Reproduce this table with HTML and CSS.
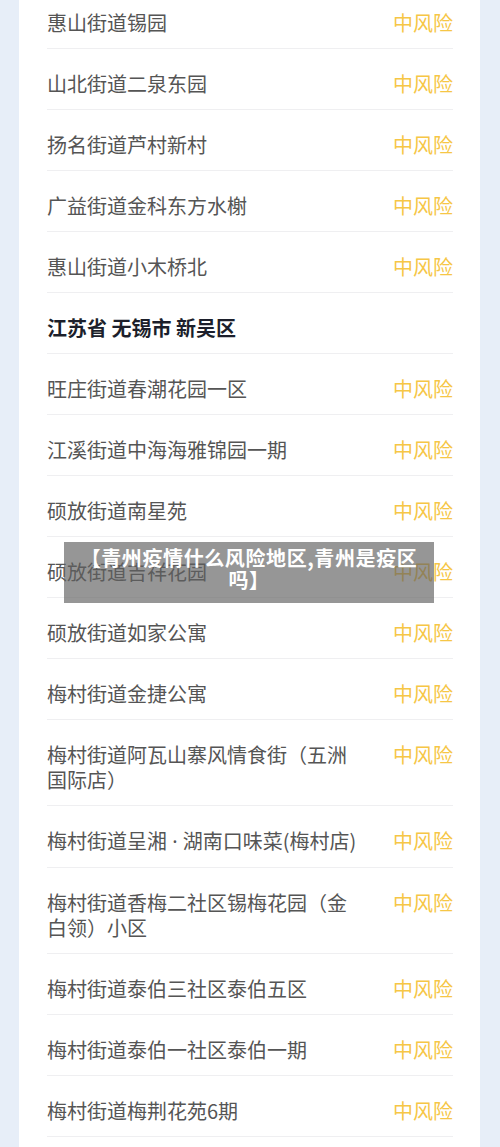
FILE: index.html
```html
<!DOCTYPE html>
<html lang="zh-CN">
<head>
  <meta charset="UTF-8">
  <meta name="viewport" content="width=device-width, initial-scale=1.0">
  <title>风险地区</title>
  <link rel="stylesheet" href="styles.css">
</head>
<body>
  <div class="card">
    <ul class="area-list">
      <li class="area-row"><span class="area-name">惠山街道锡园</span><span class="risk">中风险</span></li>
      <li class="area-row"><span class="area-name">山北街道二泉东园</span><span class="risk">中风险</span></li>
      <li class="area-row"><span class="area-name">扬名街道芦村新村</span><span class="risk">中风险</span></li>
      <li class="area-row"><span class="area-name">广益街道金科东方水榭</span><span class="risk">中风险</span></li>
      <li class="area-row"><span class="area-name">惠山街道小木桥北</span><span class="risk">中风险</span></li>
      <!-- region header -->
      <li class="area-row region">江苏省 无锡市 新吴区</li>
      <li class="area-row"><span class="area-name">旺庄街道春潮花园一区</span><span class="risk">中风险</span></li>
      <li class="area-row"><span class="area-name">江溪街道中海海雅锦园一期</span><span class="risk">中风险</span></li>
      <li class="area-row"><span class="area-name">硕放街道南星苑</span><span class="risk">中风险</span></li>
      <li class="area-row"><span class="area-name">硕放街道吉祥花园</span><span class="risk">中风险</span></li>
      <li class="area-row"><span class="area-name">硕放街道如家公寓</span><span class="risk">中风险</span></li>
      <li class="area-row"><span class="area-name">梅村街道金捷公寓</span><span class="risk">中风险</span></li>
      <li class="area-row"><span class="area-name">梅村街道阿瓦山寨风情食街（五洲国际店）</span><span class="risk">中风险</span></li>
      <li class="area-row"><span class="area-name">梅村街道呈湘<span class="dot"> · </span>湖南口味菜(梅村店)</span><span class="risk">中风险</span></li>
      <li class="area-row"><span class="area-name">梅村街道香梅二社区锡梅花园（金白领）小区</span><span class="risk">中风险</span></li>
      <li class="area-row"><span class="area-name">梅村街道泰伯三社区泰伯五区</span><span class="risk">中风险</span></li>
      <li class="area-row"><span class="area-name">梅村街道泰伯一社区泰伯一期</span><span class="risk">中风险</span></li>
      <li class="area-row"><span class="area-name">梅村街道梅荆花苑6期</span><span class="risk">中风险</span></li>
    </ul>
  </div>

  <!-- caption overlay -->
  <div class="caption">【青州疫情什么风险地区,青州是疫区吗】</div>
</body>
</html>
```

FILE: styles.css
```css
/* General styling */
body {
  margin: 0;
  font-family: "Noto Sans CJK SC", "Noto Sans", sans-serif;
  background-color: #e7eef8;
  color: #555;
  overflow: hidden;
}
.card {
  margin: -12px 20px 0 19px;
  padding: 0 27px 30px 28px;
  background-color: #fff;
}
/* List styling */
.area-list {
  list-style: none;
  margin: 0;
  padding: 0;
}
.area-row {
  display: flex;
  justify-content: space-between;
  align-items: flex-start;
  padding: 22px 0 13px;
  font-size: 20px;
  line-height: 25px;
  border-bottom: 1px solid #efeff1;
}
.area-name {
  width: 318px;
  color: #555;
}
.dot {
  font-family: "Noto Sans", sans-serif;
}
.risk {
  color: #f6c646;
  white-space: nowrap;
}
.region {
  font-weight: bold;
  color: #1c1f2b;
}
/* Caption overlay */
.caption {
  position: absolute;
  top: 542px;
  left: 64px;
  width: 342px;
  padding: 5px 14px 12px;
  background-color: rgba(95, 95, 95, 0.66);
  color: #fff;
  font-size: 20px;
  font-weight: bold;
  line-height: 22px;
  letter-spacing: 0.6px;
  text-align: center;
}
```
